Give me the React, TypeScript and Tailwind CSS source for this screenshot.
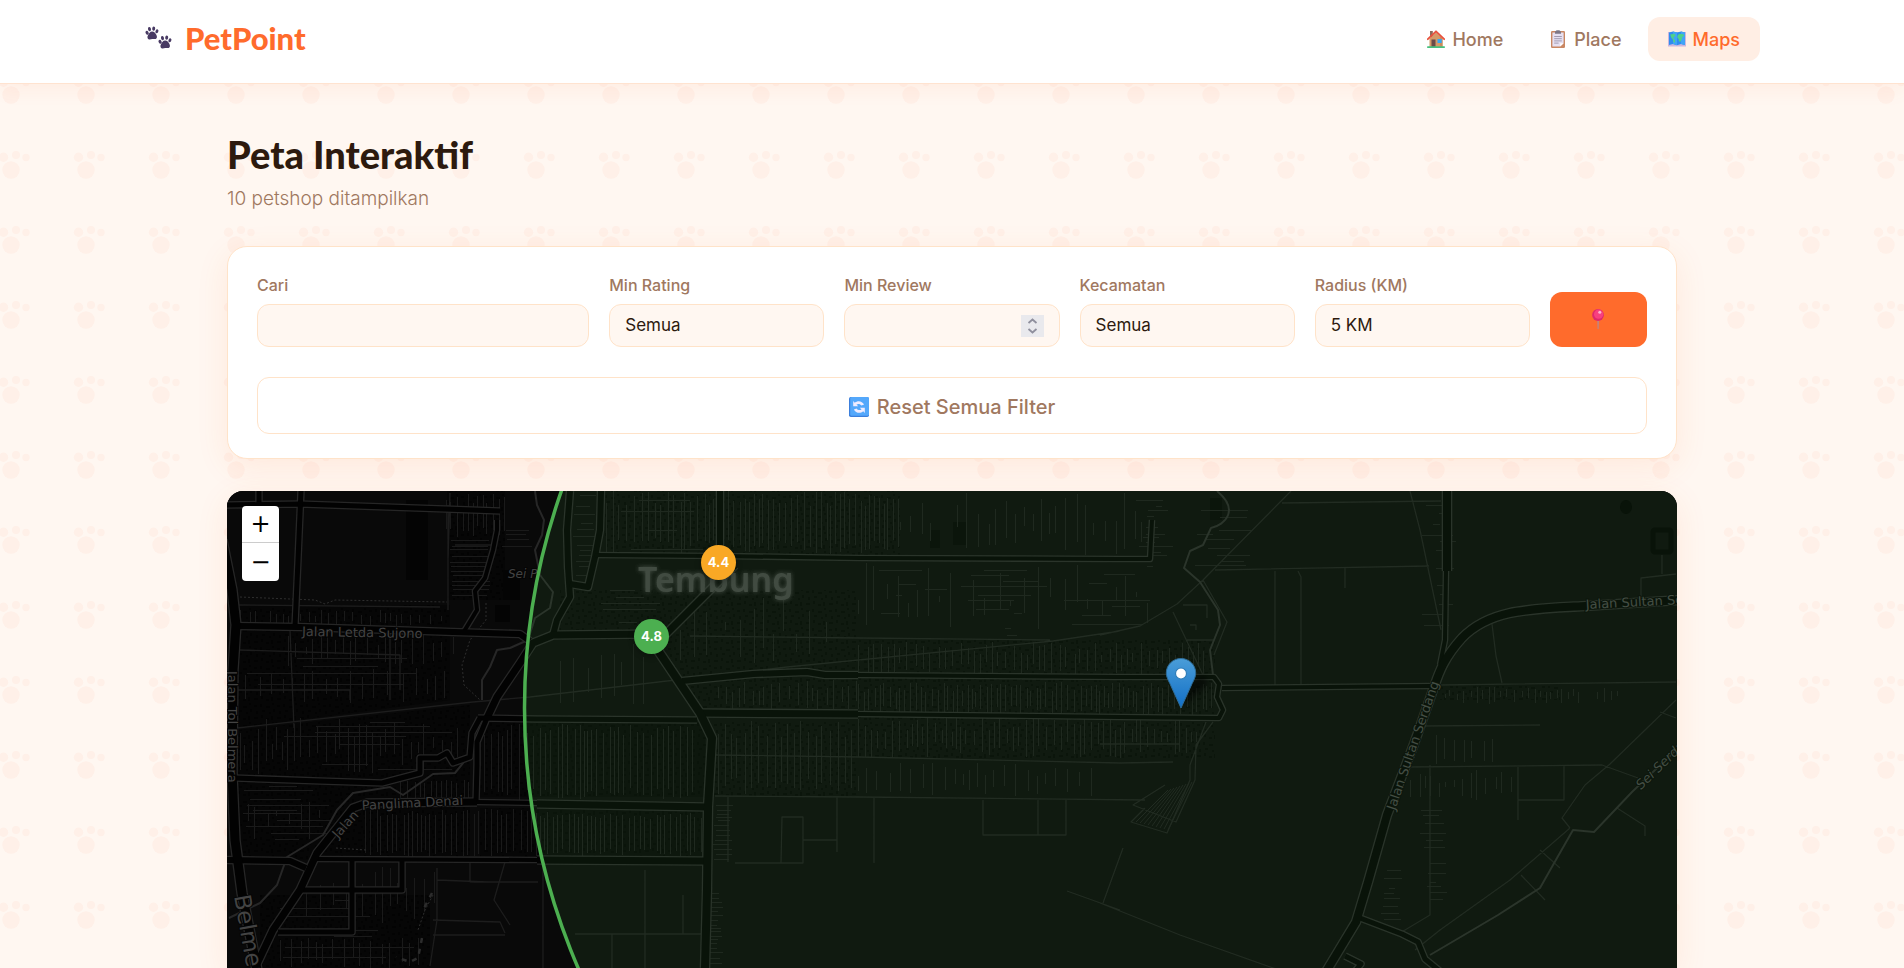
import { useState } from "react";
import type { ReactNode } from "react";

/* ---------- icons ---------- */

function PawShape() {
  return (
    <g fill="#483a63">
      <ellipse cx="2.6" cy="6.2" rx="1.5" ry="2" transform="rotate(-30 2.6 6.2)" />
      <ellipse cx="5" cy="2.6" rx="1.5" ry="2.1" transform="rotate(-14 5 2.6)" />
      <ellipse cx="9.2" cy="2.1" rx="1.5" ry="2.1" transform="rotate(6 9.2 2.1)" />
      <ellipse cx="12.4" cy="4.8" rx="1.4" ry="2" transform="rotate(26 12.4 4.8)" />
      <path d="M7.6 5c2.300 0 3.200 1.600 4.200 3.200 1 1.600 1 4.200-1.200 4.400-1.100.1-1.900-.3-2.900-.2-1 .1-1.800.6-2.900.5-2.100-.3-2.200-2.900-1.200-4.500C4.600 6.900 5.400 5 7.600 5z" />
    </g>
  );
}

function PawsIcon() {
  return (
    <svg viewBox="0 0 29 24" className="h-6 w-[29px]" aria-hidden="true">
      <g transform="translate(0.500 0.500)">
        <PawShape />
      </g>
      <g transform="translate(13.500 9.500)">
        <PawShape />
      </g>
    </svg>
  );
}

function HouseIcon() {
  return (
    <svg viewBox="0 0 18 18" className="size-[18px]" aria-hidden="true">
      <rect x="3" y="1" width="2.800" height="6" fill="#8c6a5c" />
      <path d="M2.500 8.500 9 2.500l6.500 6V17h-13z" fill="#d59a68" />
      <path d="M9 2.500 15.500 8.500V17H13V6z" fill="#c98b5c" />
      <path d="M.8 9.200 9 1.300l8.200 7.900" fill="none" stroke="#e8513c" strokeWidth="1.800" strokeLinecap="round" strokeLinejoin="round" />
      <rect x="4.500" y="9.500" width="4" height="7.500" fill="#6b4a49" />
      <rect x="10.500" y="9" width="4.200" height="4" fill="#35a7f2" />
      <rect x="0" y="16.300" width="18" height="1.700" rx=".8" fill="#46c07e" />
    </svg>
  );
}

function ClipboardIcon() {
  return (
    <svg viewBox="-2 0 18 18" className="size-[18px]" aria-hidden="true">
      <rect x="0" y="1" width="14" height="17" rx="1.200" fill="#c98763" />
      <path d="M1.400 2.400h11.200v10.800l-3.400 3.400H1.400z" fill="#e6e0f2" />
      <path d="M12.600 13.200 9.200 16.600v-3.400z" fill="#fff" />
      <path d="M4 3.800V1.800L5.600.300h2.800L10 1.800v2z" fill="#7d7787" />
      <path d="M3.200 6.500h7.600M3.200 8.700h7.600M3.200 10.900h7.600M3.200 13.100h4.400" stroke="#9a93aa" strokeWidth=".9" />
    </svg>
  );
}

function MapIcon() {
  return (
    <svg viewBox="0 0 18 16" className="h-4 w-[18px]" aria-hidden="true">
      <path d="M0 1h18v14.500H0z" fill="#cbb6dd" />
      <path d="M1 1.500 5 .5l4 1 4-1 4 1v12.500l-4-1-4 1.200-4-1.200-4 1z" fill="#2f8cf0" />
      <path d="M5 .5l4 1v12.700l-4-1.200zM13 .5l4 1v12.500l-4-1z" fill="#3fa4f7" />
      <path d="M2.200 3.400l3.600-.7 1.900 1-1.200 2-1.300.8.900 1.800 1.200 1.400-.9 2.200-1-.9-.5-2.600-1.700-2z" fill="#4fd08a" />
      <path d="M9.800 4l2-1.300 3.600.5.7 1.800-1.800 1.100-.5 2.200-1.600 2.600-1.400-.8-.1-2.200-1.500-1.400z" fill="#4fd08a" />
    </svg>
  );
}

function PushpinIcon() {
  return (
    <svg viewBox="0 0 12 21" className="h-[21px] w-3" aria-hidden="true">
      <path d="M5.300 10h1.600l-.3 9.500-.5 1-.5-1z" fill="#b18a94" />
      <circle cx="6" cy="6" r="5.900" fill="#e0286b" />
      <circle cx="6.600" cy="5.200" r="4.600" fill="#f8407f" />
      <circle cx="7.800" cy="3.300" r="1.500" fill="#ffb3cd" />
    </svg>
  );
}

function RefreshIcon() {
  return (
    <svg viewBox="0 0 20 20" className="size-5" aria-hidden="true">
      <rect width="20" height="20" rx="1.800" fill="#3c7fdc" />
      <rect x="1.200" width="18.800" height="18.800" rx="1.500" fill="#54a8fb" />
      <path d="M4.200 4v5.200h5L7.500 7.600c1.700-1.200 3.700-.7 5 .9l2.600-.9C13.300 4 8.900 3 5.800 5.700z" fill="#f0ecff" />
      <path d="M15.800 16v-5.200h-5l1.700 1.600c-1.700 1.200-3.700.7-5-.9l-2.600.9c1.800 3.600 6.200 4.600 9.300 1.900z" fill="#f0ecff" />
    </svg>
  );
}

function LocationMarker() {
  return (
    <svg viewBox="0 0 52 54" className="h-[54px] w-[52px]" aria-hidden="true">
      <defs>
        <linearGradient id="marker-fill" x1="0" y1="0" x2="0" y2="1">
          <stop offset="0" stopColor="#4a9dd8" />
          <stop offset="1" stopColor="#126fc6" />
        </linearGradient>
        <filter id="marker-shadow" x="-30%" y="-30%" width="160%" height="160%">
          <feGaussianBlur stdDeviation="3" />
        </filter>
      </defs>
      <path d="M17 50 25 24l14-6 4 8z" fill="#000" opacity=".55" filter="url(#marker-shadow)" />
      <path
        d="M16 1.500C7.800 1.500 1.300 8 1.300 16c0 3.600 1.700 6.800 3.500 10.400L16 51l11.200-24.600C29 22.800 30.700 19.600 30.700 16c0-8-6.500-14.500-14.700-14.500z"
        fill="url(#marker-fill)"
        stroke="#2e6c97"
        strokeWidth="1"
      />
      <circle cx="16" cy="16.500" r="5.500" fill="#fff" stroke="#2f7db8" strokeWidth="1.200" />
    </svg>
  );
}

/* ---------- page backdrop ---------- */

function PawBackdrop() {
  return (
    <svg className="pointer-events-none absolute inset-0 h-full w-full" aria-hidden="true">
      <defs>
        <pattern id="paws" width="75" height="75" patternUnits="userSpaceOnUse">
          <g fill="#fff0e8">
            <circle cx="11" cy="20" r="8.700" />
            <circle cx="3.500" cy="7.300" r="4.700" />
            <circle cx="78.500" cy="7.300" r="4.700" />
            <circle cx="16" cy="5" r="4" />
            <circle cx="26" cy="7.500" r="3.700" />
          </g>
        </pattern>
      </defs>
      <rect width="100%" height="100%" fill="url(#paws)" />
    </svg>
  );
}

/* ---------- street map ---------- */

type Road = { d: string; w: number };

const ROADS: Road[] = [
  { w: 5, d: "M227 505 300 504 445 509 500 511" },
  { w: 5, d: "M259 491V504M301 491 298 560 295 626" },
  { w: 4, d: "M497 520 497 530 493 550 485 578 475 591 477 610 463 633" },
  { w: 6, d: "M570 491 567 530 568 567 570 597 557 620 553 635" },
  { w: 6, d: "M601 491 600 530 595 557 588 587 570 584" },
  { w: 4, d: "M595 555 720 556 860 558 1120 559 1150 559 1152 520" },
  { w: 6, d: "M720 491V556" },
  { w: 7, d: "M735 565 710 590 660 640" },
  { w: 6, d: "M235 626 300 627 453 632 520 634 530 641" },
  { w: 7, d: "M655 634 553 635 533 643 520 663 497 697 487 718" },
  { w: 5, d: "M487 718 477 742 477 765 476 802" },
  { w: 6, d: "M682 681 753 674 807 672 825 675 858 675" },
  { w: 4, d: "M858 675 1120 677 1214 677 1219 684 1217 697 1223 710 1219 718 1120 717 858 714" },
  { w: 7, d: "M698 713 858 714" },
  { w: 5, d: "M478 718 537 719 697 720" },
  { w: 7, d: "M537 804 707 807M537 860 705 861" },
  { w: 4, d: "M474 802 537 803M313 859 537 860" },
  { w: 5, d: "M235 778 320 781 382 783 420 773 420 758 438 758 447 753 453 763 470 757 472 733 480 718" },
  { w: 5, d: "M300 890H402V860M352 860V932H278" },
  { w: 8, d: "M651 640 700 713 712 738 708 807 707 890 705 968" },
  { w: 6, d: "M227 860 290 861 306 868" },
  { w: 7, d: "M477 802 367 803 353 808 333 833 317 853 300 890 273 930 255 968" },
  { w: 9, d: "M222 540 232 590 236 625 233 670 232 773 235 840 242 893 258 975" },
  { w: 8, d: "M1447 491V571" },
  { w: 4, d: "M1446 570 1445 640 1440 665" },
  { w: 4, d: "M1222 688 1430 686" },
  { w: 5, d: "M1360 918 1402 934 1418 942 1425 959 1441 972M1345 956 1361 964 1352 975" },
  { w: 8, d: "M1680 600 1586 606C1530 609 1490 609 1462 638C1442 660 1438 676 1433 690L1414 744 1387 815 1368 882 1356 922 1324 975" },
];

const RIVERS =
  "M535 491 537 505 544 520 542 535 535 550 540 575 553 592 550 608 535 618 528 640 510 648 497 650 490 667 482 680 482 700M468 757 455 773 433 774 403 795 390 787 353 793 337 810 323 835 287 857 277 885 260 903 229 918" +
  "M1217 491C1240 510 1225 525 1211 528L1203 545 1190 551 1184 568 1200 582 1218 610 1220 625 1210 650 1213 675" +
  "M1676 750 1632 792 1594 832 1573 830 1553 865 1540 888 1498 915 1430 955";

const LANES =
  "M237 728 473 702 530 697 650 683 787 667 1053 641 1120 631M1100 635 1140 626 1177 604 1203 580 1291 491M1203 580 1227 622 1214 655" +
  "M690 636 860 638 1050 640M715 755 860 757 1120 763 1173 762M715 796 860 797 1145 800M1100 744H1180M874 797V863M983 800V835H1066V800M1038 800V835" +
  "M1067 891 1120 910M1123 848 1103 903M1100 903 1180 935 1276 969M1282 503 1441 501M1215 570 1429 566M1275 571V688M1298 571 1301 577V688M1345 568V588" +
  "M1410 491 1420 530 1441 630M1492 624 1496 656 1502 683M1440 685 1676 682M1424 726 1540 725M1408 767 1602 765 1638 778M1430 765V915L1400 933" +
  "M1676 700 1610 764 1585 785 1562 818 1570 828M1570 828 1510 880 1440 930 1415 950M1676 718 1660 712M1518 767V820M1564 765V800H1518" +
  "M782 817H803V863H781ZM803 840H837V797M837 840V852M735 863H803M728 797V862M645 870V968M575 934H705M683 895V934M612 934V968" +
  "M1641 600V578L1676 574M1662 555V574M1173 612 1203 675M1187 640H1213M1183 605H1207V618M1190 625H1196V630" +
  "M1213 722 1196 745 1195 780 1176 822 1133 805 1165 785M1206 722 1190 765 1190 780 1167 833 1131 822 1145 808" +
  "M437 868V920L430 966M437 880 488 882M470 860V882H538M505 862 494 900 510 925M543 863V968M433 920 500 922 505 933M433 935H505" +
  "M448 505V610M455 545H497M450 493 448 560M237 605 440 607M240 650 400 655 400 690M290 630 294 728M237 690 350 690 350 700M390 630V700M1540 850 1560 868M1521 875 1545 900M1617 808 1645 826V836";

const DASHES = "M240 597 315 600 325 604 335 600 447 602M486 603V620L470 640 462 665 464 685 480 700M336 848 366 850M433 895 425 910 418 930";
const BLOBS = "M432 893 422 912M422 938 418 958 410 962 396 957";

/** Small seeded generator, so the side streets are the same on every render. */
function seeded(seed: number) {
  let s = seed;
  return () => {
    s = (s * 16807) % 2147483647;
    return s / 2147483647;
  };
}

type Block = { x: number; y: number; w: number; h: number; step: number; dir: "v" | "h"; cut: number };

const BLOCKS: Block[] = [
  { x: 240, y: 610, w: 205, h: 16, step: 8, dir: "v", cut: 0.5 },
  { x: 288, y: 634, w: 165, h: 32, step: 9, dir: "v", cut: 0.5 },
  { x: 245, y: 658, w: 185, h: 35, step: 10, dir: "h", cut: 0.5 },
  { x: 245, y: 668, w: 200, h: 36, step: 13, dir: "v", cut: 0.4 },
  { x: 240, y: 718, w: 220, h: 58, step: 7, dir: "v", cut: 0.6 },
  { x: 245, y: 722, w: 210, h: 55, step: 6, dir: "h", cut: 0.8 },
  { x: 240, y: 786, w: 95, h: 60, step: 6, dir: "h", cut: 0.5 },
  { x: 248, y: 790, w: 80, h: 50, step: 10, dir: "v", cut: 0.6 },
  { x: 400, y: 780, w: 68, h: 20, step: 6, dir: "v", cut: 0.2 },
  { x: 365, y: 808, w: 172, h: 50, step: 6, dir: "v", cut: 0.2 },
  { x: 484, y: 724, w: 214, h: 76, step: 6, dir: "v", cut: 0.2 },
  { x: 540, y: 812, w: 162, h: 44, step: 5, dir: "v", cut: 0.2 },
  { x: 262, y: 900, w: 170, h: 68, step: 10, dir: "h", cut: 0.6 },
  { x: 280, y: 938, w: 140, h: 30, step: 9, dir: "v", cut: 0.4 },
  { x: 306, y: 864, w: 130, h: 60, step: 11, dir: "v", cut: 0.5 },
  { x: 450, y: 540, w: 40, h: 58, step: 5, dir: "h", cut: 0.1 },
  { x: 446, y: 493, w: 60, h: 44, step: 5, dir: "v", cut: 0.4 },
  { x: 500, y: 530, w: 32, h: 18, step: 6, dir: "h", cut: 0.3 },
  { x: 573, y: 495, w: 24, h: 88, step: 8, dir: "h", cut: 0.4 },
  { x: 606, y: 491, w: 110, h: 62, step: 6, dir: "v", cut: 0.3 },
  { x: 606, y: 500, w: 110, h: 50, step: 14, dir: "h", cut: 0.5 },
  { x: 728, y: 491, w: 170, h: 64, step: 5, dir: "v", cut: 0.3 },
  { x: 900, y: 491, w: 95, h: 64, step: 12, dir: "v", cut: 0.7 },
  { x: 995, y: 491, w: 155, h: 66, step: 10, dir: "v", cut: 0.6 },
  { x: 858, y: 562, w: 300, h: 74, step: 11, dir: "v", cut: 0.7 },
  { x: 868, y: 570, w: 100, h: 68, step: 7, dir: "h", cut: 0.9 },
  { x: 960, y: 570, w: 90, h: 68, step: 6, dir: "h", cut: 0.9 },
  { x: 1060, y: 566, w: 90, h: 60, step: 7, dir: "h", cut: 0.9 },
  { x: 600, y: 590, w: 60, h: 42, step: 9, dir: "h", cut: 0.6 },
  { x: 680, y: 595, w: 150, h: 70, step: 14, dir: "v", cut: 0.7 },
  { x: 560, y: 642, w: 90, h: 70, step: 11, dir: "v", cut: 0.5 },
  { x: 858, y: 642, w: 350, h: 33, step: 7, dir: "v", cut: 0.5 },
  { x: 858, y: 682, w: 355, h: 34, step: 5, dir: "v", cut: 0.4 },
  { x: 858, y: 716, w: 340, h: 42, step: 6, dir: "v", cut: 0.5 },
  { x: 858, y: 762, w: 240, h: 35, step: 10, dir: "v", cut: 0.5 },
  { x: 718, y: 680, w: 138, h: 30, step: 7, dir: "v", cut: 0.5 },
  { x: 718, y: 720, w: 138, h: 76, step: 7, dir: "v", cut: 0.3 },
  { x: 713, y: 805, w: 20, h: 56, step: 4, dir: "h", cut: 0.3 },
  { x: 703, y: 893, w: 20, h: 75, step: 4, dir: "h", cut: 0.4 },
  { x: 1135, y: 495, w: 38, h: 75, step: 5, dir: "h", cut: 0.7 },
  { x: 1185, y: 495, w: 70, h: 75, step: 7, dir: "h", cut: 0.8 },
  { x: 1420, y: 505, w: 40, h: 120, step: 8, dir: "h", cut: 0.8 },
  { x: 1445, y: 686, w: 180, h: 18, step: 6, dir: "v", cut: 0.6 },
  { x: 1436, y: 735, w: 60, h: 30, step: 9, dir: "v", cut: 0.3 },
  { x: 1410, y: 768, w: 110, h: 34, step: 8, dir: "v", cut: 0.7 },
  { x: 1420, y: 810, w: 28, h: 90, step: 7, dir: "h", cut: 0.6 },
  { x: 1376, y: 870, w: 30, h: 50, step: 7, dir: "h", cut: 0.7 },
];

function sideStreets(blocks: Block[]) {
  const rand = seeded(4211);
  const parts: string[] = [];
  for (const b of blocks) {
    const along = b.dir === "v" ? b.w : b.h;
    const across = b.dir === "v" ? b.h : b.w;
    for (let p = 0; p < along; p += b.step * (0.6 + rand() * 0.8)) {
      const start = across * b.cut * rand() * 0.8;
      const end = across - across * b.cut * rand() * 0.8;
      if (end - start < 4) continue;
      const q = Math.round(p) + 0.5;
      const s = Math.round(start);
      const e = Math.round(end);
      parts.push(b.dir === "v" ? `M${b.x + q} ${b.y + s}V${b.y + e}` : `M${b.x + s} ${b.y + q}H${b.x + e}`);
    }
  }
  return parts.join("");
}

const SIDE_STREETS = sideStreets(BLOCKS);

const FIELD_LINES = Array.from({ length: 9 }, (_, i) => `M${1168 + i * 3} ${790 - i}L${1136 + i * 4} ${822 + i}`).join("");

function StreetMap() {
  return (
    <svg
      viewBox="227 491 1450 477"
      preserveAspectRatio="xMinYMin slice"
      className="absolute inset-0 h-full w-full"
      role="img"
      aria-label="Peta petshop"
    >
      <defs>
        <pattern id="houses" width="23" height="19" patternUnits="userSpaceOnUse">
          <path
            d="M1 2h3v2H1zM7 1h2v3H7zM13 3h4v2h-4zM19 0h2v2h-2zM3 8h2v3H3zM9 7h3v2H9zM16 9h2v2h-2zM20 6h2v3h-2zM1 14h4v2H1zM8 12h2v3H8zM13 15h3v2h-3zM18 13h2v4h-2z"
            fill="#000"
            fillOpacity=".5"
          />
        </pattern>
        <filter id="halo" x="-10%" y="-40%" width="120%" height="180%">
          <feDropShadow dx="0" dy="0" stdDeviation="2.500" floodColor="#4a4a4a" floodOpacity="1" />
        </filter>
      </defs>

      <rect x="227" y="491" width="1450" height="900" fill="#090909" />
      <path
        d="M237 605H450V700L237 728ZM237 730 470 705V860H237ZM260 895H430V968H260ZM447 491H505V600H447ZM480 722H705V797H480ZM480 808H705V858H480Z"
        fill="#060606"
      />
      <path
        d="M237 605H450V700L237 728ZM237 730 470 705V860H237ZM260 895H430V968H260ZM447 491H505V600H447ZM480 722H858V797H480ZM480 808H705V858H480ZM605 491H900V555H605ZM858 640H1215V760H858ZM560 590H858V710H700L650 640H560ZM1440 686H1560V700H1440Z"
        fill="url(#houses)"
      />
      <path d="M406 500H428V580H406ZM503 570H520V600H503ZM495 605H510V622H495ZM930 530H940V548H930ZM953 522H966V545H953ZM1210 498H1222V520H1210Z" fill="#040404" />
      <rect x="1653" y="530" width="18" height="22" rx="2" fill="#090909" stroke="#020202" strokeWidth="5" />
      <ellipse cx="1626" cy="507" rx="6" ry="7" fill="#020202" />

      <g fill="none" strokeLinejoin="round">
        <path d={SIDE_STREETS} stroke="#1a1a1a" />
        <path d={FIELD_LINES} stroke="#1d1d1d" />
        <path d={LANES} stroke="#1d1d1d" strokeWidth="1.300" />
        <path d={RIVERS} stroke="#272727" strokeWidth="2" />
        <path d={DASHES} stroke="#2e2e2e" strokeDasharray="2 2" />
        <path d={BLOBS} stroke="#2c2c2c" strokeWidth="2.500" strokeDasharray="5 6" />
        {ROADS.map((r) => (
          <path key={r.d} d={r.d} stroke="#262626" strokeWidth={r.w + 2.6} />
        ))}
        {ROADS.map((r) => (
          <path key={r.d} d={r.d} stroke="#020202" strokeWidth={r.w} />
        ))}
      </g>

      <g fontFamily="'DejaVu Sans', sans-serif" fontSize="13" fill="#434343" stroke="#050505" strokeWidth="2" paintOrder="stroke">
        <text x="302" y="636" transform="rotate(1 302 636)">Jalan Letda Sujono</text>
        <text x="362" y="810" transform="rotate(-3 362 810)">Panglima Denai</text>
        <text x="338" y="839" transform="rotate(-48 338 839)">Jalan</text>
        <text x="228" y="671" transform="rotate(90 228 671)">Jalan Tol Belmera</text>
        <text x="234" y="896" transform="rotate(80 234 896)" fontSize="23">Belmera</text>
        <text x="508" y="578" fontSize="12" fontStyle="italic">Sei P</text>
        <text x="1395" y="811" transform="rotate(-71 1395 811)">Jalan Sultan Serdang</text>
        <text x="1586" y="609" transform="rotate(-3 1586 609)">Jalan Sultan Serdang</text>
        <text x="1641" y="790" transform="rotate(-44 1641 790)" fontStyle="italic">Sei Serdang</text>
      </g>

      <text x="638" y="592" fontFamily="'Noto Sans', 'Open Sans', sans-serif" fontSize="34" fontWeight="600" fill="#414141" filter="url(#halo)">
        Tembung
      </text>

      <circle cx="1181.500" cy="708" r="657" fill="#4caf50" fillOpacity=".1" stroke="#4caf50" strokeWidth="3.500" />
    </svg>
  );
}

/* ---------- form parts ---------- */

const CONTROL =
  "h-[43px] w-full appearance-none rounded-xl border border-[#ffe3c9] bg-[#fff7f1] px-[15px] text-[17px] text-[#2d1a0e] outline-none focus:border-[#ff6b2c]";

function Field({ id, label, children }: { id: string; label: string; children: ReactNode }) {
  return (
    <div className="flex min-w-0 flex-col gap-2.5">
      <label htmlFor={id} className="text-base leading-[18px] font-medium text-[#a0785f]">
        {label}
      </label>
      {children}
    </div>
  );
}

const NAV = [
  { label: "Home", icon: <HouseIcon />, active: false },
  { label: "Place", icon: <ClipboardIcon />, active: false },
  { label: "Maps", icon: <MapIcon />, active: true },
];

export default function App() {
  const [query, setQuery] = useState("");
  const [rating, setRating] = useState("Semua");
  const [review, setReview] = useState("");
  const [district, setDistrict] = useState("Semua");
  const [radius, setRadius] = useState("5 KM");

  const reset = () => {
    setQuery("");
    setRating("Semua");
    setReview("");
    setDistrict("Semua");
    setRadius("5 KM");
  };

  return (
    <div className="relative flex h-screen flex-col overflow-hidden bg-[#fff7f1] font-['Inter','Liberation_Sans',sans-serif]">
      <PawBackdrop />

      <header className="relative border-b border-[#ffe3d0] bg-white px-6 pt-[17px] pb-[22px] shadow-[0_4px_20px_rgba(255,107,44,0.08)]">
        <div className="mx-auto flex max-w-[1616px] items-center justify-between">
          <a href="#" className="flex items-center gap-3 pb-0.5 font-['Lato',sans-serif] text-[31px] leading-9 font-black text-[#ff6b2c]">
            <PawsIcon />
            PetPoint
          </a>
          <nav className="flex gap-1.5">
            {NAV.map((item) => (
              <a
                key={item.label}
                href="#"
                className={
                  item.active
                    ? "flex h-11 items-center gap-[7px] rounded-xl bg-[#ffeee4] px-5 text-[18px] font-medium text-[#ff6b2c]"
                    : "flex h-11 items-center gap-[7px] rounded-xl px-5 text-[18px] font-medium text-[#a0785f]"
                }
              >
                {item.icon}
                {item.label}
              </a>
            ))}
          </nav>
        </div>
      </header>

      <main className="relative mx-auto flex min-h-0 w-full max-w-[1450px] flex-1 flex-col pt-[46px]">
        <h1 className="font-['Lato',sans-serif] text-[38px] leading-[48px] font-black text-[#2d1a0e]">Peta Interaktif</h1>
        <p className="mt-2 text-[19px] leading-[26px] font-light text-[#a0785f]">10 petshop ditampilkan</p>

        <section className="mt-[34px] rounded-[20px] border border-[#ffe3c9] bg-white px-[29px] pt-[29px] pb-6 shadow-[0_8px_32px_rgba(255,107,44,0.1)]">
          <div className="grid grid-cols-[332fr_215fr_215fr_215fr_215fr_97fr] items-end gap-5">
            <Field id="cari" label="Cari">
              <input id="cari" type="text" value={query} onChange={(e) => setQuery(e.target.value)} className={CONTROL} />
            </Field>
            <Field id="rating" label="Min Rating">
              <select id="rating" value={rating} onChange={(e) => setRating(e.target.value)} className={CONTROL}>
                <option>Semua</option>
              </select>
            </Field>
            <Field id="review" label="Min Review">
              <div className="relative">
                <input id="review" type="text" inputMode="numeric" value={review} onChange={(e) => setReview(e.target.value)} className={CONTROL} />
                <span className="absolute inset-y-0 right-4 flex items-center">
                  <svg viewBox="0 0 23 22" className="h-[22px] w-[23px] bg-[#e9e9ed]" aria-hidden="true">
                    <path d="M7.500 8 11.500 4.500 15.500 8M7.500 14 11.500 17.500 15.500 14" fill="none" stroke="#8f8f9d" strokeWidth="1.800" />
                  </svg>
                </span>
              </div>
            </Field>
            <Field id="kecamatan" label="Kecamatan">
              <select id="kecamatan" value={district} onChange={(e) => setDistrict(e.target.value)} className={CONTROL}>
                <option>Semua</option>
              </select>
            </Field>
            <Field id="radius" label="Radius (KM)">
              <select id="radius" value={radius} onChange={(e) => setRadius(e.target.value)} className={CONTROL}>
                <option>5 KM</option>
              </select>
            </Field>
            <button type="button" aria-label="Lokasi saya" className="flex h-[55px] items-center justify-center rounded-xl bg-[#ff6b2c]">
              <PushpinIcon />
            </button>
          </div>
          <button
            type="button"
            onClick={reset}
            className="mt-[30px] flex h-[57px] w-full items-center justify-center gap-2 rounded-xl border border-[#ffe3c9] bg-white pt-0.5 text-[20px] font-medium text-[#a0785f]"
          >
            <RefreshIcon />
            Reset Semua Filter
          </button>
        </section>

        <section className="relative mt-8 min-h-0 flex-1 overflow-hidden rounded-t-2xl bg-[#090909] shadow-[0_8px_32px_rgba(255,107,44,0.1)]">
          <StreetMap />

          <div className="absolute top-[15px] left-[15px] flex w-[37px] flex-col overflow-hidden rounded-sm bg-white font-['DejaVu_Sans',sans-serif] text-[24px] leading-9 text-black">
            <button type="button" aria-label="Perbesar" className="h-[37px] border-b border-[#ccc]">
              +
            </button>
            <button type="button" aria-label="Perkecil" className="h-[38px]">
              −
            </button>
          </div>

          <button
            type="button"
            className="absolute top-[54px] left-[474px] size-[35px] rounded-full bg-[#f9a825] text-[13px] font-bold text-white shadow-[0_2px_6px_rgba(0,0,0,0.3)]"
          >
            4.4
          </button>
          <button
            type="button"
            className="absolute top-32 left-[407px] size-[35px] rounded-full bg-[#4caf50] text-[13px] font-bold text-white shadow-[0_2px_6px_rgba(0,0,0,0.3)]"
          >
            4.8
          </button>
          <div className="absolute top-[166px] left-[938px]">
            <LocationMarker />
          </div>
        </section>
      </main>
    </div>
  );
}
